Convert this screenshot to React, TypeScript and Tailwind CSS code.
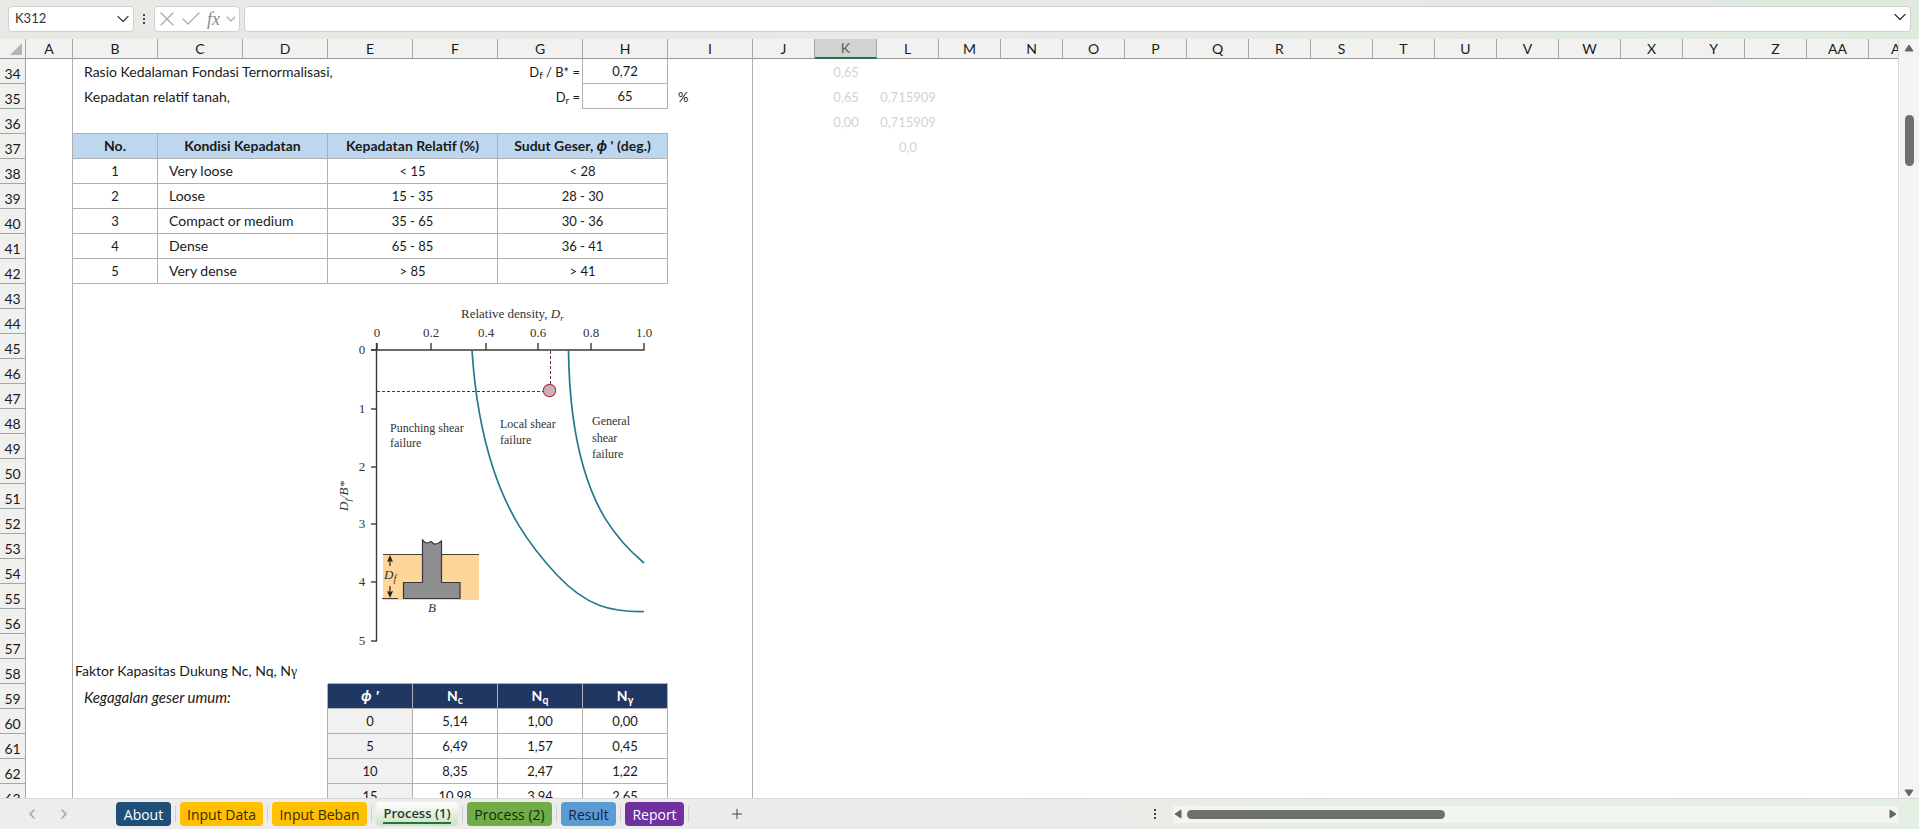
import { useState, type ReactNode } from "react";
import clsx from "clsx";
import { Check, ChevronDown, ChevronLeft, ChevronRight, Plus, X } from "lucide-react";

const WIDE_COLUMNS = ["B", "C", "D", "E", "F", "G", "H", "I"];
const NARROW_COLUMNS = ["J", "K", "L", "M", "N", "O", "P", "Q", "R", "S", "T", "U", "V", "W", "X", "Y", "Z", "AA"];

const DENSITY_ROWS = [
    ["1", "Very loose", "< 15", "< 28"],
    ["2", "Loose", "15 - 35", "28 - 30"],
    ["3", "Compact or medium", "35 - 65", "30 - 36"],
    ["4", "Dense", "65 - 85", "36 - 41"],
    ["5", "Very dense", "> 85", "> 41"],
];

const CAPACITY_ROWS = [
    ["0", "5,14", "1,00", "0,00"],
    ["5", "6,49", "1,57", "0,45"],
    ["10", "8,35", "2,47", "1,22"],
    ["15", "10,98", "3,94", "2,65"],
];

const TABS = [
    { name: "About", style: "w-[55px] bg-[#1f4e78] text-white" },
    { name: "Input Data", style: "w-[83px] bg-[#ffc000] text-[#3a2c00]" },
    { name: "Input Beban", style: "w-[95px] bg-[#ffc000] text-[#3a2c00]" },
    { name: "Process (1)", style: "w-[82px]" },
    { name: "Process (2)", style: "w-[85px] bg-[#70ad47] text-[#14290a]" },
    { name: "Result", style: "w-[55px] bg-[#5b9bd5] text-[#10253a]" },
    { name: "Report", style: "w-[59px] bg-[#7030a0] text-white" },
];

interface CellProps {
    children?: ReactNode;
    span?: number;
    rows?: number;
    className?: string;
    right?: boolean;
    bottom?: boolean;
}

function Cell({ children, span = 1, rows = 1, className, right, bottom }: CellProps) {
    return (
        <td
            colSpan={span}
            rowSpan={rows}
            className={clsx(
                "border-[#b0b0b0] p-0 text-center align-middle whitespace-nowrap",
                right && "border-r",
                bottom && "border-b",
                className
            )}
        >
            {children}
        </td>
    );
}

interface RowProps {
    number: number;
    children?: ReactNode;
    k?: string;
    l?: string;
}

// Every row carries its number, column A and the columns from I to the right edge.
function Row({ number, children, k, l }: RowProps) {
    return (
        <tr className="h-[25px]">
            <th
                scope="row"
                className="border-r border-b border-[#a6a6a6] bg-[#f0f0ef] p-0 pt-1.5 text-center align-bottom text-[14px] leading-[18px] font-normal"
            >
                {number}
            </th>
            <Cell right />
            {children}
            <Cell right>{number === 35 && <div className="pl-2.5 text-left text-[13px]">%</div>}</Cell>
            <Cell />
            <Cell className="text-[13px] text-[#d2d2d2]">{k}</Cell>
            <Cell className="text-[13px] text-[#d2d2d2]">{l}</Cell>
            <Cell span={16} />
        </tr>
    );
}

function ColumnHeader({ label, selected }: { label: string; selected?: boolean }) {
    return (
        <th
            scope="col"
            className={clsx(
                "border-r border-r-[#a6a6a6] p-0 text-center text-[14px] leading-[18px] font-normal",
                selected
                    ? "border-b-2 border-b-[#217346] bg-[#d2d2d2] text-[#3f6b57]"
                    : "border-b border-b-[#969696]"
            )}
        >
            {label}
        </th>
    );
}

function ShearChart() {
    const xTicks: [number, string][] = [[377, "0"], [431, "0.2"], [486, "0.4"], [538, "0.6"], [591, "0.8"], [644, "1.0"]];
    const yTicks = [350, 409, 467, 524, 582, 641];

    return (
        <svg
            viewBox="328 284 339 374"
            width="339"
            height="374"
            className="block"
            fontFamily="'Liberation Serif', serif"
            fontSize="13"
            fill="#333"
            role="img"
            aria-label="Relative density against foundation depth"
        >
            <text x="461" y="318">
                Relative density, <tspan fontStyle="italic">D</tspan>
                <tspan fontStyle="italic" fontSize="9" dy="3">r</tspan>
            </text>
            <g stroke="#3c3838" strokeWidth="1.4" fill="none">
                <path d="M371 350H644.5M376.5 343V641" />
                {xTicks.map(([x]) => (
                    <path key={x} d={`M${x} 343V350`} />
                ))}
                {yTicks.map((y) => (
                    <path key={y} d={`M371 ${y}H377`} />
                ))}
            </g>
            {xTicks.map(([x, label]) => (
                <text key={x} x={x} y="337" textAnchor="middle">{label}</text>
            ))}
            {yTicks.map((y, index) => (
                <text key={y} x="362" y={y + 4} textAnchor="middle">{index}</text>
            ))}
            <text transform="translate(348 511) rotate(-90)" fontStyle="italic">
                D<tspan fontSize="9" dy="3">f</tspan>
                <tspan dy="-3">/B*</tspan>
            </text>

            {/* Failure boundaries */}
            <g stroke="#23788f" strokeWidth="1.7" fill="none">
                <path d="M472 350C474 382 479 425 493 468S527 543 557 575S612 612 644 611.5" />
                <path d="M568.5 350C569 395 573 432 584 469S611 535 644 563" />
            </g>
            <g fontSize="12">
                <text x="390" y="432">Punching shear</text>
                <text x="390" y="447">failure</text>
                <text x="500" y="428">Local shear</text>
                <text x="500" y="444">failure</text>
                <text x="592" y="425">General</text>
                <text x="592" y="442">shear</text>
                <text x="592" y="458">failure</text>
            </g>

            {/* Current design point */}
            <path d="M377 391.5H543M550.5 351V384" stroke="#7a2038" strokeWidth="1" strokeDasharray="3 2" fill="none" />
            <circle cx="549.5" cy="390.5" r="6.2" fill="#c8b3ba" stroke="#bf3348" strokeWidth="1.2" />

            {/* Footing sketch */}
            <rect x="383" y="554" width="96" height="46" fill="#fed699" />
            <path d="M383 554.5H479M382 598.5H398" stroke="#4a3f33" strokeWidth="1.2" />
            <path
                d="M422.5 540L425 542.5L428 543L431 541.5L434 544L438 543.5L441.5 541V582.5H460V598.5H403.5V582.5H422.5Z"
                fill="#8f8f92"
                stroke="#39363a"
                strokeWidth="1.2"
            />
            <path d="M390 558V566M390 586V595" stroke="#2d241b" strokeWidth="1.2" />
            <path d="M390 555L393 562L390 561L387 562ZM390 598L393 591L390 592L387 591Z" fill="#2d241b" />
            <text x="384" y="579" fontStyle="italic" fontSize="13">
                D<tspan fontSize="10" dy="3">f</tspan>
            </text>
            <text x="432" y="612" fontStyle="italic" textAnchor="middle">B</text>
        </svg>
    );
}

function FormulaBar() {
    return (
        <header className="flex h-[39px] shrink-0 items-start bg-linear-to-r from-[#e6e9e4] via-[#e9e9e8] to-[#dfeade] pt-1.5 pr-2 pl-2">
            <div className="flex h-[26px] w-[126px] shrink-0 items-center rounded-[4px] border border-[#cfcfcf] bg-white">
                <input
                    aria-label="Name box"
                    defaultValue="K312"
                    className="min-w-0 flex-1 bg-transparent pl-1.5 text-[13px] text-[#333] outline-none"
                />
                <button aria-label="Open name list">
                    <ChevronDown className="size-5 text-[#444]" strokeWidth={1.5} />
                </button>
            </div>
            <div className="flex h-[26px] w-5 shrink-0 flex-col items-center justify-center gap-[2px]">
                <span className="size-[2px] bg-[#444]" />
                <span className="size-[2px] bg-[#444]" />
                <span className="size-[2px] bg-[#444]" />
            </div>
            <div className="flex h-[26px] w-[86px] shrink-0 items-center rounded-[4px] border border-[#cfcfcf] bg-white text-[#ababab]">
                <button aria-label="Cancel">
                    <X className="size-6" strokeWidth={1.2} />
                </button>
                <button aria-label="Enter">
                    <Check className="size-6" strokeWidth={1.2} />
                </button>
                <button
                    aria-label="Insert function"
                    className="ml-1 font-['Liberation_Serif',serif] text-[18px] leading-5 text-[#8c8c8c] italic"
                >
                    fx
                </button>
                <button aria-label="Function list" className="ml-auto">
                    <ChevronDown className="size-4" strokeWidth={1.75} />
                </button>
            </div>
            <div className="ml-1 flex h-[26px] flex-1 items-center rounded-[4px] border border-[#cfcfcf] bg-white">
                <input aria-label="Formula" className="min-w-0 flex-1 bg-transparent px-2 text-[14px] outline-none" />
                <button aria-label="Expand formula bar" className="pb-1">
                    <ChevronDown className="size-5 text-[#333]" strokeWidth={1.5} />
                </button>
            </div>
        </header>
    );
}

function Sheet() {
    return (
        <table className="w-full table-fixed border-separate border-spacing-0 text-[14px] leading-[18px] text-[#1a1a1a]">
            <colgroup>
                <col className="w-[26px]" />
                <col className="w-[47px]" />
                {WIDE_COLUMNS.map((name) => (
                    <col key={name} className="w-[85px]" />
                ))}
                {NARROW_COLUMNS.map((name) => (
                    <col key={name} className="w-[62px]" />
                ))}
                <col />
            </colgroup>
            <thead>
                <tr className="h-5 bg-[#f1f1f0]">
                    <td className="border-r border-b border-r-[#a6a6a6] border-b-[#969696] p-0">
                        <svg viewBox="0 0 12 12" className="ml-2.5 size-3" aria-hidden="true">
                            <path d="M12 0V12H0Z" fill="#b4b4b4" />
                        </svg>
                    </td>
                    <ColumnHeader label="A" />
                    {WIDE_COLUMNS.map((name) => (
                        <ColumnHeader key={name} label={name} />
                    ))}
                    {NARROW_COLUMNS.map((name) => (
                        <ColumnHeader key={name} label={name} selected={name === "K"} />
                    ))}
                    <th
                        scope="col"
                        className="overflow-hidden border-b border-[#969696] p-0 pl-[22px] text-left text-[14px] leading-[18px] font-normal text-clip whitespace-nowrap"
                    >
                        AB
                    </th>
                </tr>
            </thead>
            <tbody>
                <Row number={34} k="0,65">
                    <Cell span={5}>
                        <div className="pl-[11px] text-left">Rasio Kedalaman Fondasi Ternormalisasi,</div>
                    </Cell>
                    <Cell right>
                        <div className="pr-0.5 text-right text-[13px]">D<sub>f</sub> / B* =</div>
                    </Cell>
                    <Cell right bottom className="text-[13px]">0,72</Cell>
                </Row>
                <Row number={35} k="0,65" l="0,715909">
                    <Cell span={5}>
                        <div className="pl-[11px] text-left">Kepadatan relatif tanah,</div>
                    </Cell>
                    <Cell right>
                        <div className="pr-0.5 text-right text-[13px]">D<sub>r</sub> =</div>
                    </Cell>
                    <Cell right bottom className="text-[13px]">65</Cell>
                </Row>
                <Row number={36} k="0,00" l="0,715909">
                    <Cell span={7} bottom />
                </Row>
                <Row number={37} l="0,0">
                    <Cell right bottom className="bg-[#bdd7ee] font-bold">No.</Cell>
                    <Cell span={2} right bottom className="bg-[#bdd7ee] font-bold">Kondisi Kepadatan</Cell>
                    <Cell span={2} right bottom className="bg-[#bdd7ee] font-bold">Kepadatan Relatif (%)</Cell>
                    <Cell span={2} right bottom className="bg-[#bdd7ee] font-bold">
                        Sudut Geser, <i className="font-['Open_Sans',sans-serif]">ϕ</i> ' (deg.)
                    </Cell>
                </Row>
                {DENSITY_ROWS.map(([no, condition, density, angle], index) => (
                    <Row key={no} number={38 + index}>
                        <Cell right bottom className="text-[13px]">{no}</Cell>
                        <Cell span={2} right bottom>
                            <div className="pl-[11px] text-left">{condition}</div>
                        </Cell>
                        <Cell span={2} right bottom className="text-[13px]">{density}</Cell>
                        <Cell span={2} right bottom className="text-[13px]">{angle}</Cell>
                    </Row>
                ))}
                <Row number={43}>
                    <Cell span={3} rows={15} />
                    <Cell span={4} rows={15} className="align-top">
                        <ShearChart />
                    </Cell>
                </Row>
                {Array.from({ length: 14 }, (_, index) => (
                    <Row key={index} number={44 + index} />
                ))}
                <Row number={58}>
                    <Cell span={3}>
                        <div className="pl-0.5 text-left">
                            Faktor Kapasitas Dukung Nc, Nq, N<span className="font-['Liberation_Serif',serif]">γ</span>
                        </div>
                    </Cell>
                    <Cell span={4} bottom />
                </Row>
                <Row number={59}>
                    <Cell span={3} right>
                        <div className="pl-[11px] text-left text-[15px] italic">Kegagalan geser umum:</div>
                    </Cell>
                    <Cell right bottom className="bg-[#203764] font-bold text-white">
                        <i className="font-['Open_Sans',sans-serif]">ϕ '</i>
                    </Cell>
                    <Cell right bottom className="bg-[#203764] font-bold text-white">N<sub>c</sub></Cell>
                    <Cell right bottom className="bg-[#203764] font-bold text-white">N<sub>q</sub></Cell>
                    <Cell right bottom className="bg-[#203764] font-bold text-white">N<sub>γ</sub></Cell>
                </Row>
                {CAPACITY_ROWS.map(([phi, nc, nq, ny], index) => (
                    <Row key={phi} number={60 + index}>
                        <Cell span={3} right />
                        <Cell right bottom className="bg-[#f1f1f1] text-[13px]">{phi}</Cell>
                        <Cell right bottom className="text-[13px]">{nc}</Cell>
                        <Cell right bottom className="text-[13px]">{nq}</Cell>
                        <Cell right bottom className="text-[13px]">{ny}</Cell>
                    </Row>
                ))}
            </tbody>
        </table>
    );
}

function Arrow({ path, label }: { path: string; label: string }) {
    return (
        <button aria-label={label} className="shrink-0">
            <svg viewBox="0 0 10 10" className="size-2.5">
                <path d={path} fill="#666" stroke="#666" strokeLinejoin="round" />
            </svg>
        </button>
    );
}

export default function App() {
    const [activeTab, setActiveTab] = useState("Process (1)");

    return (
        <div className="flex h-screen flex-col overflow-hidden bg-white font-['Lato',sans-serif]">
            <FormulaBar />

            <main className="flex min-h-0 flex-1">
                <div className="min-w-0 flex-1 overflow-hidden">
                    <Sheet />
                </div>
                <div className="flex w-[21px] shrink-0 flex-col items-center border-l border-[#d9d9d9] bg-[#f3f4f3] pt-1">
                    <Arrow label="Scroll up" path="M5 2L9 8H1Z" />
                    <div className="mt-[62px] h-[51px] w-[9px] rounded-full bg-[#6e706e]" />
                    <div className="flex-1" />
                    <Arrow label="Scroll down" path="M1 2H9L5 8Z" />
                </div>
            </main>

            {/* Sheet tabs */}
            <footer className="flex h-[31px] shrink-0 items-center border-t border-[#d9d9d9] bg-linear-to-r from-[#ededec] via-[#ebebe9] to-[#e4efe3]">
                <div className="flex w-[116px] shrink-0 items-center gap-4 pl-6 text-[#a0a0a0]">
                    <button aria-label="Previous sheet">
                        <ChevronLeft className="size-4" />
                    </button>
                    <button aria-label="Next sheet">
                        <ChevronRight className="size-4" />
                    </button>
                </div>
                <nav className="flex shrink-0 items-center font-['Open_Sans',sans-serif]">
                    {TABS.map(({ name, style }) => (
                        <div key={name} className="flex items-center">
                            <button
                                onClick={() => setActiveTab(name)}
                                className={clsx(
                                    "flex h-6 items-center justify-center rounded-[4px] text-[14px] whitespace-nowrap",
                                    style,
                                    activeTab === name &&
                                        "bg-linear-to-b from-white to-[#c9e2c0] font-semibold text-[#2b3a2b]"
                                )}
                            >
                                {activeTab === name ? (
                                    <span className="border-b-2 border-[#217346] text-[13px] leading-[18px]">{name}</span>
                                ) : (
                                    name
                                )}
                            </button>
                            <span className="mx-1 h-4 w-px bg-[#cfcfcf]" />
                        </div>
                    ))}
                </nav>
                <button aria-label="New sheet" className="ml-9">
                    <Plus className="size-4 text-[#444]" strokeWidth={1.5} />
                </button>
                <div className="flex-1" />
                <div className="flex w-[744px] shrink-0 items-center">
                    <div className="flex flex-col gap-[2px] pr-[17px]">
                        <span className="size-[2px] bg-[#444]" />
                        <span className="size-[2px] bg-[#444]" />
                        <span className="size-[2px] bg-[#444]" />
                    </div>
                    <div className="flex h-[17px] flex-1 items-center bg-[#f3f5f2]">
                        <Arrow label="Scroll left" path="M8 1V9L2 5Z" />
                        <div className="ml-1 h-[9px] w-[258px] rounded-full bg-[#6e706e]" />
                        <div className="flex-1" />
                        <Arrow label="Scroll right" path="M2 1V9L8 5Z" />
                    </div>
                </div>
                <div className="w-[21px] shrink-0" />
            </footer>
        </div>
    );
}
